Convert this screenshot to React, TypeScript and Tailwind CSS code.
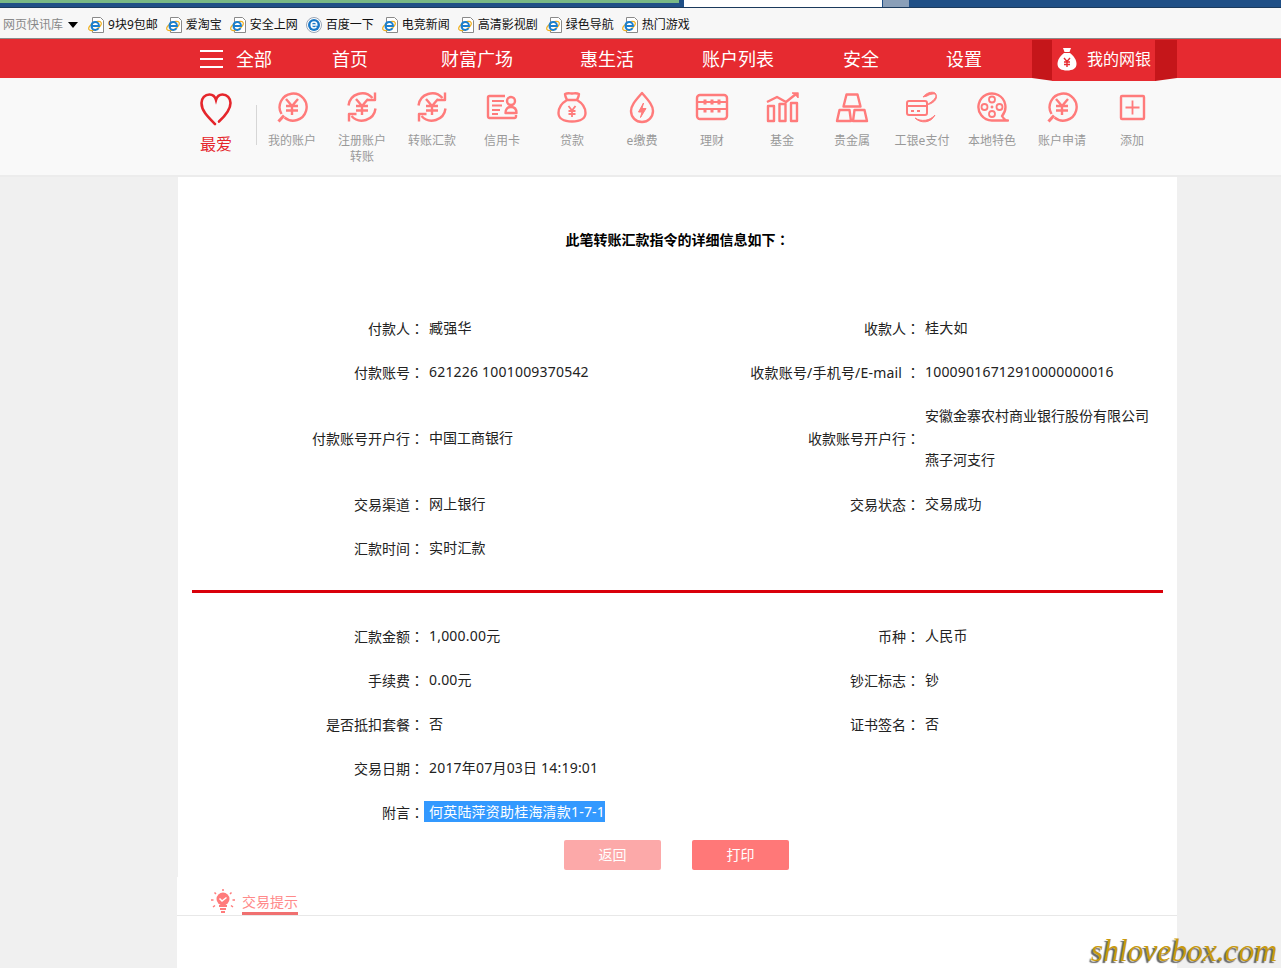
import type { ReactNode } from "react";

const yen = "M11 9l6 7 6-7M17 16v9M11 16h12M11 20.5h12";

function Ie({ round }: { round?: boolean }) {
  if (round) {
    return (
      <svg width="16" height="16" viewBox="0 0 16 16" className="shrink-0">
        <circle cx="8" cy="8" r="7.5" fill="#fff" stroke="#9aa5b5" />
        <circle cx="8" cy="8" r="6" fill="#1a78c8" />
        <path d="M5.2 8h5.6c0-1.800-1.200-2.900-2.800-2.900S5.200 6.300 5.200 8s1.200 2.900 2.800 2.900c1 0 1.900-.4 2.400-1.200" fill="none" stroke="#fff" strokeWidth="1.500" />
      </svg>
    );
  }
  return (
    <svg width="16" height="16" viewBox="0 0 16 16" className="shrink-0">
      <path d="M4.500.5h8l3 3v12h-11z" fill="#fff" stroke="#8a8a8a" />
      <ellipse cx="7" cy="9" rx="7" ry="3.500" fill="none" stroke="#f0b020" strokeWidth="1.200" transform="rotate(-30 7 9)" />
      <path d="M3.500 9h7.500c0-2.500-1.500-4-3.700-4S3.500 6.600 3.500 9s1.500 4 3.800 4c1.400 0 2.600-.6 3.300-1.700" fill="none" stroke="#1a7fd0" strokeWidth="1.900" />
    </svg>
  );
}

function Icon({ children }: { children: ReactNode }) {
  return (
    <svg width="34" height="34" viewBox="0 0 34 34" fill="none" stroke="#ff7b7b" strokeWidth="2.400" strokeLinejoin="round" className="block">
      {children}
    </svg>
  );
}

const bubble = (
  <Icon>
    <path d="M9.500 27.500A13.500 13.500 0 1 0 6.500 24" />
    <path d="M9 25.500L3.500 31.500" strokeWidth="3" />
    <path d={yen} />
  </Icon>
);

const exchange = (
  <Icon>
    <path d="M3.500 15.500A13.800 13.800 0 0 1 27.500 8" />
    <path d="M30 2.500v7.500h-7.500" />
    <path d="M30.500 18.500A13.800 13.800 0 0 1 6.500 26" />
    <path d="M4 31.500V24h7.500" />
    <path d={yen} />
  </Icon>
);

const items: { label: string; icon: ReactNode }[] = [
  { label: "我的账户", icon: bubble },
  { label: "注册账户 转账", icon: exchange },
  { label: "转账汇款", icon: exchange },
  {
    label: "信用卡",
    icon: (
      <Icon>
        <path d="M20 6H4.500A1.500 1.500 0 0 0 3 7.500v19A1.500 1.500 0 0 0 4.500 28h25a1.500 1.500 0 0 0 1.500-1.500V25" />
        <path d="M7 11h12M7 15.500h10M7 20h8M7 24h6" strokeWidth="2" />
        <circle cx="26" cy="11" r="4" />
        <path d="M20.500 23c0-4 2-6 5.500-6s5.500 2 5.500 6z" />
      </Icon>
    ),
  },
  {
    label: "贷款",
    icon: (
      <Icon>
        <path d="M12 10C11 8 10 6 10 4c3-1.500 5-.5 7-.5s4-1 7 .5c0 2-1 4-2 6" />
        <path d="M12 10h10c5 3 8.500 8 8.500 13 0 5-4.500 8.500-13.500 8.500S3.500 28 3.500 23c0-5 3.500-10 8.500-13z" />
        <path d="M13.500 16l3.500 4.500 3.500-4.500M17 20.500v6.500M13.500 21h7M13.500 24h7" strokeWidth="1.800" />
      </Icon>
    ),
  },
  {
    label: "e缴费",
    icon: (
      <Icon>
        <path d="M17 3c6 7 11 12 11 18a11 11 0 0 1-22 0C6 15 11 10 17 3z" />
        <path d="M18.500 13l-5 9h3.500l-1.500 5.500 5.500-9H17z" fill="#ff7b7b" strokeWidth="1" />
      </Icon>
    ),
  },
  {
    label: "理财",
    icon: (
      <Icon>
        <rect x="2" y="5" width="30" height="24" rx="3" />
        <path d="M2 19h30M2 12h30" strokeWidth="1.800" />
        <path d="M10 9.500v5M17 9.500v5M24 9.500v5M10 18v4.500M17 18v4.500M24 18v4.500" strokeWidth="3" />
      </Icon>
    ),
  },
  {
    label: "基金",
    icon: (
      <Icon>
        <path d="M2 12l10-5 9 5 10-8" />
        <path d="M27 3h6v5" fill="#ff7b7b" strokeWidth="1.500" />
        <path d="M3 16h6v15H3zM14.500 14h6v17h-6zM26 13h6v18h-6z" />
      </Icon>
    ),
  },
  {
    label: "贵金属",
    icon: (
      <Icon>
        <path d="M11.500 4.500h11l3 12h-17zM4.500 20h10l1.500 11H2zM19.500 20h10L32 31H18z" />
      </Icon>
    ),
  },
  {
    label: "工银e支付",
    icon: (
      <Icon>
        <rect x="2" y="11" width="20" height="14" rx="2" strokeWidth="2" />
        <path d="M2 16h20" strokeWidth="2" />
        <path d="M6 21h3M12 21h3" strokeWidth="2" />
        <path d="M18 7c3-4 9-6 12-4 3 2 0 8-9 12 7-1 12-6 10-10-1-2-6-1-9 1zM10 28c6 4 15 3 20-3-4 8-14 9-20 3z" fill="#ff7b7b" strokeWidth="1" />
      </Icon>
    ),
  },
  {
    label: "本地特色",
    icon: (
      <Icon>
        <path d="M17 30.500A13.500 13.500 0 1 1 27 26c1.500 2.500 3 4.500 6 4.500H17z" />
        <circle cx="17" cy="9.500" r="3" strokeWidth="1.800" />
        <circle cx="17" cy="24" r="3" strokeWidth="1.800" />
        <circle cx="9.500" cy="17" r="3" strokeWidth="1.800" />
        <circle cx="24.500" cy="17" r="3" strokeWidth="1.800" />
        <circle cx="17" cy="17" r="1.200" fill="#ff7b7b" strokeWidth="0.500" />
      </Icon>
    ),
  },
  { label: "账户申请", icon: bubble },
  {
    label: "添加",
    icon: (
      <Icon>
        <rect x="6" y="6" width="23" height="23" rx="1" />
        <path d="M17.500 10.500v14M10.500 17.500h14" strokeWidth="1.800" />
      </Icon>
    ),
  },
];

const links = ["9块9包邮", "爱淘宝", "安全上网", "百度一下", "电竞新闻", "高清影视剧", "绿色导航", "热门游戏"];

type Row = { a: string; b: ReactNode; c?: ReactNode; d?: ReactNode };

const plain = "tracking-normal";

const rowsTop: Row[] = [
  { a: "付款人", b: "臧强华", c: "收款人", d: "桂大如" },
  {
    a: "付款账号",
    b: "621226 1001009370542",
    c: <span className="tracking-[0.2px]">收款账号/手机号/E-mail </span>,
    d: "10009016712910000000016",
  },
  {
    a: "付款账号开户行",
    b: <span className={plain}>中国工商银行</span>,
    c: "收款账号开户行",
    d: (
      <div className={plain}>
        <div className="h-11 leading-[44px]">安徽金寨农村商业银行股份有限公司</div>
        <div className="h-11 leading-[44px]">燕子河支行</div>
      </div>
    ),
  },
  { a: "交易渠道", b: "网上银行", c: "交易状态", d: "交易成功" },
  { a: "汇款时间", b: "实时汇款" },
];

const rowsBottom: Row[] = [
  { a: "汇款金额", b: "1,000.00元", c: "币种", d: "人民币" },
  { a: "手续费", b: "0.00元", c: "钞汇标志", d: "钞" },
  { a: "是否抵扣套餐", b: "否", c: "证书签名", d: "否" },
  { a: "交易日期", b: "2017年07月03日 14:19:01" },
];

// the reference centres the full-width colon in its box, which the TC font does
function Colon() {
  return <span className="font-['Noto_Sans_CJK_TC',sans-serif]">：</span>;
}

function Rows({ rows }: { rows: Row[] }) {
  return (
    <div className="grid grid-cols-[232px_265px_231px_243px] auto-rows-[minmax(44px,auto)] items-center">
      {rows.map((r) => (
        <div key={r.a} className="contents">
          <div className="text-right">
            {r.a}
            <Colon />
          </div>
          <div className="pl-[5px] tracking-[0.2px]">{r.b}</div>
          <div className="text-right">
            {r.c}
            {r.c && <Colon />}
          </div>
          <div className="pl-[5px] tracking-[0.2px]">{r.d}</div>
        </div>
      ))}
    </div>
  );
}

export default function App() {
  return (
    <div className="relative h-[968px] overflow-hidden bg-[#f0f0f0] font-['Noto_Sans','Noto_Sans_CJK_SC',sans-serif] text-sm text-[#222] [text-spacing-trim:space-all]">
      {/* browser chrome left over at the top of the capture */}
      <div className="flex h-[8px] border-b border-[#1b3a5c] bg-[#1f4f86]">
        <div className="h-[3px] w-[679px] bg-[#78b884]" />
        <div className="ml-[5px] h-full w-[198px] bg-white" />
        <div className="ml-px h-full w-[26px] bg-[#8a9fb8]" />
      </div>
      <div className="flex h-[31px] items-center border-b border-[#8c8c8c] bg-[#f7f7f7] pl-[3px] pt-[3px] text-xs text-[#111]">
        <span className="text-[#888]">网页快讯库</span>
        <span className="ml-[5px] mr-[10px] h-0 w-0 border-x-[5px] border-t-[6px] border-x-transparent border-t-black" />
        <div className="flex gap-2">
          {links.map((l) => (
            <div key={l} className="flex items-center gap-1">
              <Ie round={l === "百度一下"} />
              <span>{l}</span>
            </div>
          ))}
        </div>
      </div>

      <div className="relative flex h-[39px] items-center bg-[#e62a30] pl-[200px] text-lg text-white">
        <div className="mr-[13px] flex h-[18px] w-[23px] flex-col justify-between">
          <span className="h-[2px] bg-white" />
          <span className="h-[2px] bg-white" />
          <span className="h-[2px] bg-white" />
        </div>
        <span>全部</span>
        <span className="ml-[60px]">首页</span>
        <span className="ml-[73px]">财富广场</span>
        <span className="ml-[67px]">惠生活</span>
        <span className="ml-[68px]">账户列表</span>
        <span className="ml-[69px]">安全</span>
        <span className="ml-[67px]">设置</span>
        <div className="absolute left-[1032px] top-[1px] h-[41px] w-[145px] bg-[#c5161a] [clip-path:polygon(0_0,100%_0,100%_38px,85%_41px,15%_41px,0_38px)]" />
        <div className="absolute left-[1052px] top-[1px] flex h-[41px] w-[103px] items-center bg-[#e62a30] pb-[3px] pl-[5px] text-base">
          <svg width="20" height="24" viewBox="0 0 20 24" className="mr-[10px]">
            <path d="M6 1h8l-1.500 4h-5z" fill="#fff" />
            <path d="M7 6h6c4 3 6.500 7 6.500 11 0 4.500-4 6.500-9.500 6.500S.500 21.500.500 17C.500 13 3 9 7 6z" fill="#fff" />
            <path d="M7 11l3 3.500 3-3.500M10 14.500V20M7 15h6M7 17.500h6" fill="none" stroke="#e62a30" strokeWidth="1.400" />
          </svg>
          <span className="whitespace-nowrap">我的网银</span>
        </div>
      </div>

      <div className="flex h-[99px] border-b-2 border-[#ececec] bg-[#f9f9f9] pl-[181px] text-xs text-[#999]">
        <div className="flex w-[70px] flex-col items-center pt-[14px] text-base text-[#e5262c]">
          <svg width="34" height="34" viewBox="0 0 34 34" fill="none" stroke="#e5262c" strokeWidth="2.600" strokeLinecap="round" className="shrink-0">
            <path d="M16 32C9 25 2.500 19 2.500 11 2.500 6 6 2.500 10.500 2.500c3 0 5.500 2 6.500 5.500 1-3.500 3.500-5.500 6.500-5.500 4.500 0 8 3.500 8 8.500 0 7-5.500 13-11.500 18.500" />
          </svg>
          <span className="mt-[6px] whitespace-nowrap leading-[24px]">最爱</span>
        </div>
        <div className="ml-[5px] mt-[27px] h-[40px] w-px bg-[#d6d6d6]" />
        <div className="flex">
          {items.map((it) => (
            <div key={it.label} className="flex w-[70px] flex-col items-center pt-[12px] text-center leading-4">
              {it.icon}
              <span className="mt-[9px] max-w-[56px]">{it.label}</span>
            </div>
          ))}
        </div>
      </div>

      <div className="ml-[178px] w-[999px] bg-white px-[14px] pb-[7px] pt-[52px]">
        <h1 className="text-center font-bold leading-5 text-black">
          此笔转账汇款指令的详细信息如下
          <Colon />
        </h1>
        <div className="mt-[56px]">
          <Rows rows={rowsTop} />
        </div>
        <div className="mb-[21px] mt-[20px] h-[3px] bg-[#d9000a]" />
        <Rows rows={rowsBottom} />
        <div className="grid h-11 grid-cols-[232px_1fr] items-center">
          <div className="text-right">
            附言
            <Colon />
          </div>
          <div>
            <span className="bg-[#3399ff] py-px pl-[5px] tracking-[0.2px] text-white">何英陆萍资助桂海清款1-7-1</span>
          </div>
        </div>
        <div className="mt-[6px] flex justify-center gap-[31px] pr-[2px] text-white">
          <button className="h-[30px] w-[97px] rounded-[2px] bg-[#fca9a9]">返回</button>
          <button className="h-[30px] w-[97px] rounded-[2px] bg-[#ff7878]">打印</button>
        </div>
      </div>

      <div className="ml-[177px] h-[91px] w-[1000px] bg-white">
        <div className="flex h-[39px] items-end border-b border-[#e8e8e8] pl-[34px]">
          <svg width="24" height="25" viewBox="0 0 24 25" className="mb-px">
            <circle cx="12" cy="10" r="6.500" fill="#ff7b7b" />
            <path d="M8.500 9.500l2.500 2.500 4.500-3.500" fill="none" stroke="#fff" strokeWidth="1.500" />
            <path d="M8 17h8M9 20h6M10 23h4" stroke="#ff7b7b" strokeWidth="2" />
            <path d="M12 0v2M3.500 3.500L5 5M20.500 3.500L19 5M0 11h2.500M21.500 11H24M2 18l2-1.500M22 18l-2-1.500" stroke="#ff7b7b" strokeWidth="1.500" />
          </svg>
          <span className="ml-[7px] border-b-[3px] border-[#f07070] leading-5 text-[#ff8a8a]">交易提示</span>
        </div>
      </div>

      <div className="absolute left-[1091px] top-[932px] font-['Liberation_Serif',serif] text-[31.5px] italic leading-[38px] text-[#c89a10] [text-shadow:-2px_2px_1px_#666]">
        shlovebox.com
      </div>
    </div>
  );
}
